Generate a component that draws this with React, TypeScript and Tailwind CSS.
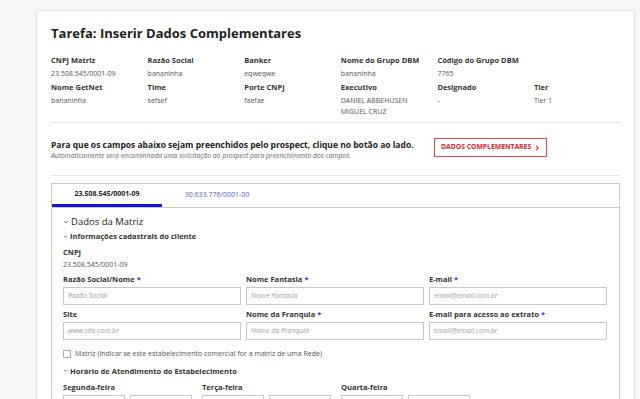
import React from 'react';

const INFO: { label: string; value: string[] }[][] = [
  [
    { label: 'CNPJ Matriz', value: ['23.508.545/0001-09'] },
    { label: 'Razão Social', value: ['bananinha'] },
    { label: 'Banker', value: ['eqweqwe'] },
    { label: 'Nome do Grupo DBM', value: ['bananinha'] },
    { label: 'Código do Grupo DBM', value: ['7765'] },
  ],
  [
    { label: 'Nome GetNet', value: ['bananinha'] },
    { label: 'Time', value: ['sefsef'] },
    { label: 'Porte CNPJ', value: ['faefae'] },
    { label: 'Executivo', value: ['DANIEL ABBEHUSEN', 'MIGUEL CRUZ'] },
    { label: 'Designado', value: ['-'] },
    { label: 'Tier', value: ['Tier 1'] },
  ],
];

function Chevron({ size = 6 }: { size?: number }) {
  return (
    <svg width={size} height={size} viewBox="0 0 10 10" className="mr-[2px] shrink-0">
      <path d="M2 3.5 L5 6.5 L8 3.5" fill="none" stroke="#333" strokeWidth="1.3" />
    </svg>
  );
}

function Field({ label, placeholder, required }: { label: string; placeholder: string; required?: boolean }) {
  return (
    <div className="flex min-w-0 flex-col">
      <div className="h-[14px] text-[7.5px] font-bold leading-[14px] text-[#333]">
        {label}
        {required && <span className="ml-[2px] text-[#3535e8]">*</span>}
      </div>
      <div className="mt-[1px] flex h-[18px] items-center border border-[#c8c8c8] px-[4px] text-[7px] italic text-[#a0a0a0]">
        {placeholder}
      </div>
    </div>
  );
}

function Day({ label }: { label: string }) {
  return (
    <div className="flex flex-col">
      <div className="h-[14px] text-[7.5px] font-bold leading-[14px] text-[#333]">{label}</div>
      <div className="mt-[1px] flex gap-[5px]">
        <div className="h-[18px] w-[62px] border border-[#c8c8c8]" />
        <div className="h-[18px] w-[62px] border border-[#c8c8c8]" />
      </div>
    </div>
  );
}

export default function App() {
  return (
    <div
      className="flex h-[399px] w-[640px] overflow-hidden bg-[#f6f6f6] pl-[36px] pr-[5px] pt-[10px]"
      style={{ fontFamily: '"Open Sans", "Liberation Sans", sans-serif' }}
    >
      <div className="min-w-0 flex-1 rounded-t-[3px] border border-b-0 border-[#e2e2e2] bg-white px-[14px] pt-[13px]">
        <h1 className="text-[13px] font-bold leading-[18px] text-[#222]">Tarefa: Inserir Dados Complementares</h1>

        {/* Resumo */}
        <div className="mt-[12px] flex flex-col">
          {INFO.map((row, i) => (
            <div key={i} className="grid grid-cols-[repeat(5,96.6px)_1fr]">
              {row.map((item) => (
                <div key={item.label} className="flex flex-col">
                  <div className="h-[13px] text-[7.5px] font-bold leading-[13px] text-[#333]">{item.label}</div>
                  {item.value.map((v) => (
                    <div key={v} className="h-[11px] text-[7px] leading-[13px] text-[#555]">
                      {v}
                    </div>
                  ))}
                  <div className="h-[3px]" />
                </div>
              ))}
            </div>
          ))}
        </div>

        <div className="mt-[3px] border-t border-[#e4e4e4]" />

        {/* Chamada */}
        <div className="mt-[16px] flex items-start">
          <div className="flex w-[383px] flex-col">
            <div className="text-[8.5px] font-bold leading-[11px] text-[#222]">
              Para que os campos abaixo sejam preenchidos pelo prospect, clique no botão ao lado.
            </div>
            <div className="text-[6.8px] italic leading-[11px] text-[#666]">
              Automaticamente será encaminhada uma solicitação ao prospect para preenchimento dos campos.
            </div>
          </div>
          <button className="mt-[-1px] flex h-[19px] items-center border border-[#e8444a] px-[6px] text-[6.8px] font-bold text-[#e0242c]">
            DADOS COMPLEMENTARES
            <svg width="6" height="6" viewBox="0 0 10 10" className="ml-[3px]">
              <path d="M3.5 1.5 L7 5 L3.5 8.5" fill="none" stroke="#e0242c" strokeWidth="1.8" />
            </svg>
          </button>
        </div>

        <div className="mt-[14px] border-t border-[#e4e4e4]" />

        {/* Abas */}
        <div className="mt-[7px] flex h-[25px] border border-[#c9c9c9]">
          <div className="flex w-[110px] flex-col">
            <div className="flex flex-1 items-center justify-center text-[7px] font-bold text-[#222]">
              23.508.545/0001-09
            </div>
            <div className="h-[3px] bg-[#1515d6]" />
          </div>
          <div className="flex w-[110px] items-center justify-center text-[7px] text-[#5a5ae0]">30.633.776/0001-00</div>
        </div>

        <div className="h-[200px] border-x border-[#c9c9c9] pl-[11px] pr-[12px] pt-[7px]">
          <div className="flex items-center text-[9.5px] leading-[14px] text-[#222]">
            <Chevron />
            Dados da Matriz
          </div>
          <div className="mt-[1px] flex items-center text-[7.5px] font-bold leading-[12px] text-[#333]">
            <Chevron size={5} />
            Informações cadastrais do cliente
          </div>
          <div className="mt-[4px] text-[7.5px] font-bold leading-[12px] text-[#333]">CNPJ</div>
          <div className="mt-[1px] text-[7px] leading-[12px] text-[#555]">23.508.545/0001-09</div>

          <div className="mt-[1px] grid grid-cols-3 gap-x-[5px] gap-y-[2px]">
            <Field label="Razão Social/Nome" placeholder="Razão Social" required />
            <Field label="Nome Fantasia" placeholder="Nome Fantasia" required />
            <Field label="E-mail" placeholder="email@email.com.br" required />
            <Field label="Site" placeholder="www.site.com.br" />
            <Field label="Nome da Franquia" placeholder="Nome da Franquia" required />
            <Field label="E-mail para acesso ao extrato" placeholder="email@email.com.br" required />
          </div>

          <div className="mt-[9px] flex items-center text-[7px] text-[#555]">
            <div className="mr-[4px] h-[8px] w-[8px] border border-[#aaa]" />
            Matriz (indicar se este estabelecimento comercial for a matriz de uma Rede)
          </div>

          <div className="mt-[5px] flex items-center text-[7.5px] font-bold leading-[12px] text-[#333]">
            <Chevron size={5} />
            Horário de Atendimento do Estabelecimento
          </div>

          <div className="mt-[3px] flex gap-[10px]">
            <Day label="Segunda-feira" />
            <Day label="Terça-feira" />
            <Day label="Quarta-feira" />
          </div>
        </div>
      </div>
    </div>
  );
}
